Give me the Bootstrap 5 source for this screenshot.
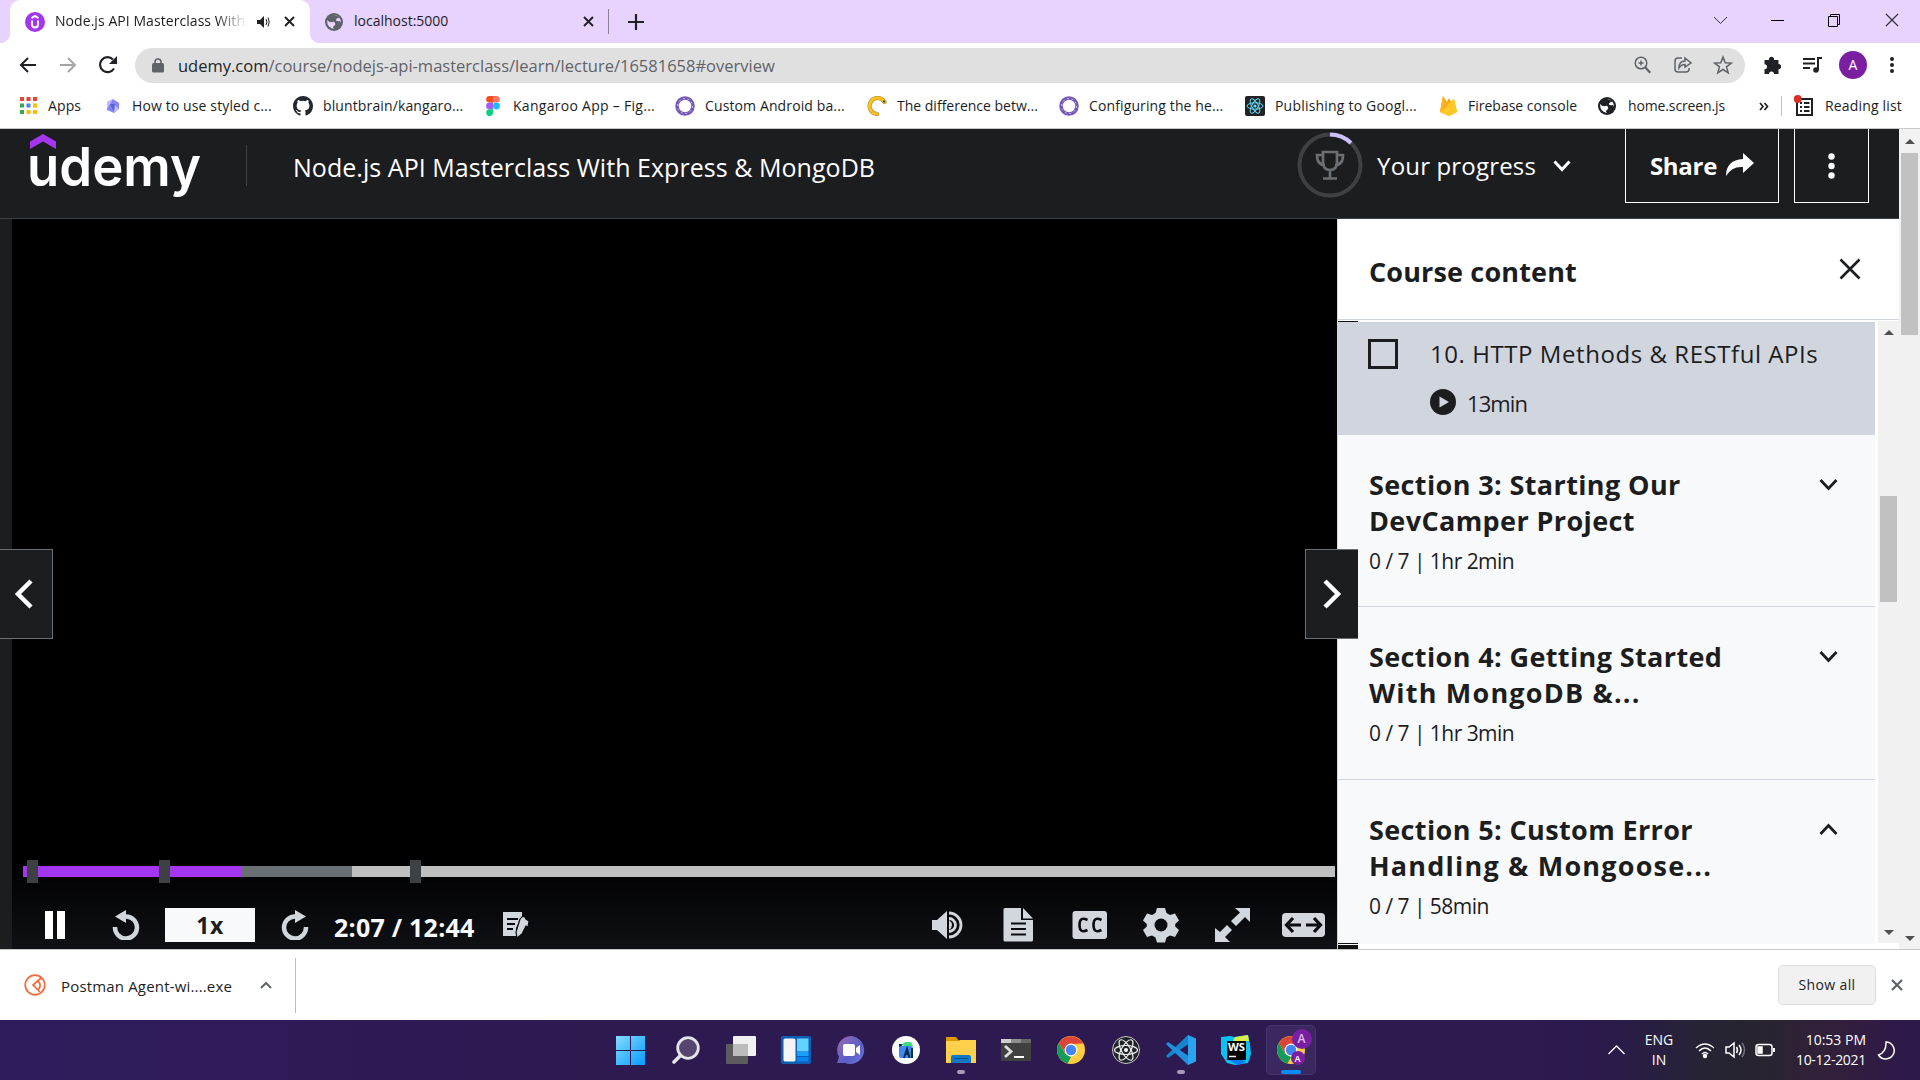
<!DOCTYPE html>
<html lang="en">
<head>
<meta charset="utf-8">
<title>Node.js API Masterclass With Express &amp; MongoDB</title>
<link rel="stylesheet" href="https://cdn.jsdelivr.net/npm/bootstrap@5.3.0/dist/css/bootstrap.min.css">
<style>
body{width:1920px;height:1080px;overflow:hidden;font-family:"Open Sans","Noto Sans",sans-serif;font-size:14px;line-height:1.2;color:#1c1d1f;background:#fff}
svg{display:block;flex:none}
span{white-space:nowrap}
.tabstrip{height:43px;background:#e8d3ff;padding-left:10px}
.tab-on{width:300px;height:43px;background:#fff;border-radius:10px 10px 0 0;padding-left:15px}
.tab-on:before,.tab-on:after{content:"";position:absolute;bottom:0;width:10px;height:10px}
.tab-on:before{left:-10px;background:radial-gradient(circle at 0 0,#e8d3ff 10px,#fff 10.5px)}
.tab-on:after{right:-10px;background:radial-gradient(circle at 100% 0,#e8d3ff 10px,#fff 10.5px)}
.tab-title{width:192px;letter-spacing:.06px;-webkit-mask-image:linear-gradient(90deg,#000 84%,transparent)}
.tab-off{width:298px;padding-left:15px}
.toolbar{height:44px}
.omnibox{width:1610px;height:35px;border-radius:18px;background:#e0e0e0;padding-left:17px;font-size:16.5px;color:#5f6368}
.url{padding-top:1px}
.me{width:28px;height:28px;border-radius:50%;background:#7b1fa2;color:#fff;font-size:14px}
.bookmarks{height:42px;border-bottom:1px solid #c8c8c8;padding-left:18px;display:grid;grid-template-columns:84px 191px 190px 192px 192px 192px 186px 193px 160px 162px 30px 13px 31px auto;align-items:center;padding-bottom:3px}
.bookmarks span{letter-spacing:.12px;padding-top:1px}
.bm-ico{width:30px;flex:none}
.page{height:820px}
.top-bar{height:90px;background:#1c1d1f;color:#fff;border-bottom:1px solid #3e4143;font-size:24px}
.course-name{font-size:25px;letter-spacing:.04px}
.brand-sep{width:1px;height:41px;background:#3e4143}
.outlined{border:1px solid #fff;border-top:0;height:74px;align-self:flex-start}
.scroller{width:21px;background:#f1f1f1}
.gutter{width:12px;background:#1c1d1f}
.player{width:1325px;background:#000}
.player-foot{height:121px;background:linear-gradient(#000 30%,#101116)}
.track{width:1312px;height:11px;margin:38px 0 0 11px;background:#bfbfbf}
.cue{top:-6px;width:11px;height:23px;background:#3e4143}
.ctl{height:46px;margin-top:25px;padding-left:33px;color:#f7f9fa}
.speed{width:90px;height:34px;background:#f7f9fa;color:#1c1d1f;font-weight:700;font-size:23px;letter-spacing:.6px;padding-top:2px}
.clock-time{width:142px;font-size:25px;letter-spacing:.25px;padding-top:3px}
.side{width:562px;background:#fff;border-left:1px solid #d1d7dc}
.side-head{height:101px;border-bottom:1px solid #d1d5de;padding:0 38px 0 31px;font-size:27px;font-weight:700}
.side-head span{letter-spacing:.15px;padding-top:6px}
.side-list{height:622px;width:537px;margin-top:2px;overflow:hidden;background:#f8f9fb}
.lec{height:113px;background:#d1d5de;padding:17px 0 0 30px}
.lec-name{font-size:24px;letter-spacing:.56px}
.lec-len{font-size:22px;letter-spacing:-.9px;padding-top:3px}
.tick{width:30px;height:30px;border:3px solid #1c1d1f;flex:none}
.sec{height:173px;padding:32px 37px 0 31px;border-bottom:1px solid #d1d5de}
.sec-first{height:172px}
.sec svg{margin-top:11px}
.sec-t{font-size:27px;font-weight:700;line-height:36px;letter-spacing:.38px}
.wide-t{letter-spacing:1.2px}
.sec-s{font-size:21px;line-height:36px;margin-top:4px;letter-spacing:-.53px}
.side-scroll{height:622px;margin-top:1px}
.jump{top:330px;width:53px;height:90px;background:#1c1d1f;border:1px solid #6a6f73;z-index:2}
.sliver{left:1338px;width:20px;height:1px;background:#111}
.shelf{height:71px;border-top:1px solid #c6c6c6;background:#fff;padding-left:24px}
.dl-name{width:171px;font-size:15px;letter-spacing:.17px;padding-top:1px}
.showall{width:98px;height:40px;border:1px solid #dadce0;border-radius:5px;background:#f1f1f1;letter-spacing:.37px}
.tbar{height:60px;color:#fff;background:linear-gradient(90deg,#2e1b5b 0,#2d1a51 600px,#2d1a51 1520px,#2b1b4b 1610px,#262335 1700px,#27242f 1760px,#32203a 1830px,#2f1a47 1890px,#2d1a4a)}
.slot{width:55px;height:60px}
.dotrun{bottom:6px;width:8px;height:4px;border-radius:2px;background:#a69bb8}
.active-app{width:50px;height:50px;border-radius:5px;background:#3a2860;border:1px solid #46356a}
.badge-a{border-radius:50%;background:#7b1fa2;color:#fff;font-weight:600;line-height:1}
.stack{line-height:20px}
</style>
</head>
<body class="d-flex flex-column">

<div class="tabstrip d-flex align-items-start">
  <div class="tab-on d-flex align-items-center position-relative">
    <svg width="20" height="20" viewBox="0 0 20 20"><circle cx="10" cy="10" r="10" fill="#a435f0"/><path d="M6.500 6.200 10 4l3.500 2.200M7 8.500v4a3 3 0 0 0 6 0v-4" fill="none" stroke="#fff" stroke-width="2"/></svg>
    <span class="tab-title" style="margin-left:10px">Node.js API Masterclass With</span>
    <svg style="margin-left:10px" width="13" height="12" viewBox="0 0 13 12"><path d="M0 4h3l4-4v12L3 8H0z" fill="#202124"/><path d="M9 3q2 3 0 6M11 1.500q2.500 4.500 0 9" fill="none" stroke="#202124"/></svg>
    <svg style="margin-left:14px" width="11" height="11" viewBox="0 0 11 11"><path d="M1 1l9 9M10 1l-9 9" stroke="#202124" stroke-width="1.900"/></svg>
  </div>
  <div class="tab-off d-flex align-items-center h-100">
    <svg width="18" height="18" viewBox="0 0 18 18"><circle cx="9" cy="9" r="9" fill="#5f6368"/><path d="M2 7q3 3 5 2t3 1-1 3 0 3Q2 15 2 7zM9 2q4 0 5 3-3 0-3 2t4 1l1 2q0-7-7-8z" fill="#e8d3ff"/></svg>
    <span style="margin-left:11px">localhost:5000</span>
    <svg class="ms-auto" style="margin-right:14px" width="11" height="11" viewBox="0 0 11 11"><path d="M1 1l9 9M10 1l-9 9" stroke="#202124" stroke-width="1.900"/></svg>
  </div>
  <div class="d-flex align-items-center h-100 flex-grow-1">
    <div style="width:1px;height:25px;background:#8b8494"></div>
    <svg style="margin-left:19px" width="16" height="16" viewBox="0 0 16 16"><path d="M8 0v16M0 8h16" stroke="#202124" stroke-width="2.200"/></svg>
    <svg class="ms-auto mb-1" style="margin-right:18px" width="206" height="14" viewBox="0 0 206 14"><path d="M18 4l6.500 6.500L31 4" fill="none" stroke="#333"/><path d="M75 7.500h13" stroke="#000"/><path d="M132.500 3.500h9v10h-9zM134.500 3.500v-2h9v10h-2" fill="none" stroke="#000"/><path d="M190 1l12 12M202 1l-12 12" stroke="#333" stroke-width="1.200"/></svg>
  </div>
</div>

<div class="toolbar d-flex align-items-center">
  <svg width="135" height="20" viewBox="0 0 135 20"><path d="M36 10H21M28 3l-7 7 7 7" fill="none" stroke="#202124" stroke-width="2"/><path d="M60 10h15M68 3l7 7-7 7" fill="none" stroke="#a5a5a5" stroke-width="2"/><path d="M114 13.500A7.500 7.500 0 1 1 113 4.500" fill="none" stroke="#202124" stroke-width="2.200"/><path d="M117 1v8h-8z" fill="#202124"/></svg>
  <div class="omnibox d-flex align-items-center">
    <svg width="12" height="15" viewBox="0 0 12 15"><rect y="5" width="12" height="9.500" rx="1.500" fill="#5f6368"/><path d="M3 6V4a3 3 0 0 1 6 0v2" fill="none" stroke="#5f6368" stroke-width="1.600"/></svg>
    <span style="margin-left:14px" class="url"><i class="fst-normal text-dark">udemy.com</i>/course/nodejs-api-masterclass/learn/lecture/16581658#overview</span>
    <svg class="ms-auto" style="margin-right:12px" width="100" height="20" viewBox="0 0 100 20" fill="none" stroke="#5f6368" stroke-width="1.500"><circle cx="8" cy="8" r="5.800"/><path d="M12.200 12.200l5 5.500" stroke-width="2.200"/><path d="M5.500 8h5M8 5.500v5"/><path d="M49 3h-4q-3 0-3 3v8q0 3 3 3h8q3 0 3-3v-1"/><path d="M46 13q0-7 6-7V3l6 5-6 4V9.500q-4 0-6 3.500z"/><path d="M90 2l2.200 5.800 6.100.3-4.800 3.800 1.700 5.900L90 14.500l-5.200 3.300 1.700-5.900-4.800-3.800 6.100-.3z"/></svg>
  </div>
  <svg style="margin-left:18px" width="80" height="20" viewBox="0 0 80 20"><path d="M1.500 5H6a2.600 2.600 0 1 1 5 0h4.500v4a2.600 2.600 0 1 1 0 5.200V19H11a2.500 2.500 0 1 0-5 0H1.500v-4.700a2.500 2.500 0 1 0 0-5z" fill="#202124"/><path d="M40 4h12M40 8.500h12M40 13h7M55 15V3h4" fill="none" stroke="#202124" stroke-width="2"/><circle cx="53" cy="15" r="2.800" fill="#202124"/></svg>
  <div class="me d-flex align-items-center justify-content-center" style="margin-left:-4px">A</div>
  <svg style="margin-left:23px" width="4" height="18" viewBox="0 0 4 18" fill="#202124"><circle cx="2" cy="3" r="2"/><circle cx="2" cy="9" r="2"/><circle cx="2" cy="15" r="2"/></svg>
</div>

<div class="bookmarks">
  <div class="d-flex align-items-center"><div class="bm-ico"><svg style="margin-left:2px" width="17" height="17" viewBox="0 0 17 17"><path d="M0 0h4v4H0zM6.500 0h4v4h-4zM13 0h4v4h-4z" fill="#ea4335"/><path d="M0 6.500h4v4H0zM0 13h4v4H0z" fill="#34a853"/><path d="M6.500 6.500h4v4h-4z" fill="#4285f4"/><path d="M13 6.500h4v4h-4zM6.500 13h4v4h-4zM13 13h4v4h-4z" fill="#fbbc05"/></svg></div><span>Apps</span></div>
  <div class="d-flex align-items-center"><div class="bm-ico"><svg style="margin-left:4px" width="14" height="14" viewBox="0 0 14 14"><path d="M7 0l6 4v6l-5 4-7-3V3z" fill="#8586f5"/><path d="M7 0L4 5l-3 5V3zM8 5l5 5-5 4z" fill="#c3bcfa"/><path d="M4 5h5l-1 8z" fill="#5b5fd8"/></svg></div><span>How to use styled c...</span></div>
  <div class="d-flex align-items-center"><div class="bm-ico"><svg width="20" height="20" viewBox="0 0 16 16"><path fill="#24292f" d="M8 0C3.580 0 0 3.580 0 8c0 3.540 2.290 6.530 5.470 7.590.4.070.55-.17.55-.38 0-.19-.010-.82-.010-1.490-2.010.37-2.530-.49-2.690-.94-.09-.23-.48-.94-.82-1.130-.28-.15-.68-.52-.010-.53.63-.010 1.080.58 1.230.82.72 1.210 1.870.87 2.330.66.070-.52.28-.87.51-1.070-1.780-.2-3.640-.89-3.640-3.950 0-.87.31-1.590.82-2.150-.08-.2-.36-1.020.08-2.120 0 0 .67-.21 2.200.82a7.600 7.600 0 0 1 4 0c1.530-1.040 2.200-.82 2.200-.82.44 1.100.16 1.920.08 2.120.51.56.82 1.270.82 2.150 0 3.070-1.870 3.750-3.650 3.950.29.25.54.73.54 1.480 0 1.070-.010 1.930-.010 2.200 0 .21.15.46.55.38A8 8 0 0 0 16 8c0-4.420-3.580-8-8-8z"/></svg></div><span>bluntbrain/kangaro...</span></div>
  <div class="d-flex align-items-center"><div class="bm-ico"><svg style="margin-left:3px" width="14" height="20" viewBox="0 0 14 20"><path d="M3.500 0H7v6.600H3.500a3.300 3.300 0 0 1 0-6.600z" fill="#f24e1e"/><path d="M7 0h3.500a3.300 3.300 0 0 1 0 6.600H7z" fill="#ff7262"/><path d="M3.500 6.600H7v6.700H3.500a3.300 3.300 0 0 1 0-6.700z" fill="#a259ff"/><circle cx="10.500" cy="10" r="3.400" fill="#1abcfe"/><path d="M3.500 13.300H7v3.300a3.400 3.400 0 1 1-3.500-3.300z" fill="#0acf83"/></svg></div><span style="letter-spacing:.28px">Kangaroo App – Fig...</span></div>
  <div class="d-flex align-items-center"><div class="bm-ico"><svg width="20" height="20" viewBox="0 0 20 20" fill="none"><circle cx="10" cy="10" r="8" stroke="#7457b8" stroke-width="3.500"/><circle cx="10" cy="10" r="7.500" stroke="#cfc3ea" stroke-dasharray="2 2.700"/></svg></div><span>Custom Android ba...</span></div>
  <div class="d-flex align-items-center"><div class="bm-ico"><svg width="20" height="20" viewBox="0 0 20 20" fill="none"><path d="M17.500 6A8 8 0 1 0 10 18" stroke="#a98b3a" stroke-width="4.200" stroke-linecap="round"/><path d="M17.500 6A8 8 0 1 0 10 18" stroke="#fcc21b" stroke-width="3" stroke-linecap="round"/><circle cx="17" cy="5.500" r="1" fill="#222"/></svg></div><span style="letter-spacing:0">The difference betw...</span></div>
  <div class="d-flex align-items-center"><div class="bm-ico"><svg width="20" height="20" viewBox="0 0 20 20" fill="none"><circle cx="10" cy="10" r="8" stroke="#7457b8" stroke-width="3.500"/><circle cx="10" cy="10" r="7.500" stroke="#cfc3ea" stroke-dasharray="2 2.700"/></svg></div><span>Configuring the he...</span></div>
  <div class="d-flex align-items-center"><div class="bm-ico"><svg width="20" height="20" viewBox="0 0 20 20"><rect width="20" height="20" rx="2" fill="#222"/><g fill="none" stroke="#61dafb"><ellipse cx="10" cy="10" rx="8" ry="3.200"/><ellipse cx="10" cy="10" rx="8" ry="3.200" transform="rotate(60 10 10)"/><ellipse cx="10" cy="10" rx="8" ry="3.200" transform="rotate(120 10 10)"/></g><circle cx="10" cy="10" r="1.600" fill="#61dafb"/></svg></div><span style="letter-spacing:.2px">Publishing to Googl...</span></div>
  <div class="d-flex align-items-center"><div class="bm-ico"><svg style="margin-left:2px" width="17" height="20" viewBox="0 0 17 20"><path d="M0 16L3 0l4 6 2-4 2 4 3-3 3 13-8 4z" fill="#ffa000"/><path d="M0 16L11 5l3-2 3 13-8 4z" fill="#ffca28"/><path d="M0 16L3 0l6 10z" fill="#ffb020"/></svg></div><span style="letter-spacing:0">Firebase console</span></div>
  <div class="d-flex align-items-center"><div class="bm-ico"><svg width="18" height="18" viewBox="0 0 18 18"><circle cx="9" cy="9" r="9" fill="#202124"/><path d="M2 7q3 3 5 2t3 1-1 3 0 3Q2 15 2 7zM9 2q4 0 5 3-3 0-3 2t4 1l1 2q0-7-7-8z" fill="#fff"/></svg></div><span style="letter-spacing:-.13px">home.screen.js</span></div>
  <svg style="margin-left:-1px" width="10" height="9" viewBox="0 0 10 9"><path d="M1 1l3 3.500L1 8M5.500 1l3 3.500-3 3.500" fill="none" stroke="#202124" stroke-width="1.700"/></svg>
  <div style="margin-left:-9px;width:1px;height:20px;background:#c0c0c0"></div>
  <svg style="margin-left:-9px;margin-top:-1px" width="20" height="22" viewBox="0 0 20 22"><rect x="3" y="4" width="15" height="16" fill="none" stroke="#202124" stroke-width="2"/><path d="M6 8h2M6 12h2M6 16h2M10 8h5.500M10 12h5.500M10 16h5.500" stroke="#202124" stroke-width="1.800"/><circle cx="3.700" cy="4" r="4" fill="#d93025"/></svg>
  <span style="margin-left:-9px;letter-spacing:.17px">Reading list</span>
</div>

<div class="page d-flex">
  <div class="d-flex flex-column" style="width:1899px">
    <header class="top-bar d-flex align-items-center">
      <svg class="overflow-visible align-self-start" style="margin-left:30px" width="171" height="80" viewBox="0 0 171 80"><path d="M0 12.500L13 5l13 7.500V20L13 12.500 0 20z" fill="#a435f0"/><text x="-3" y="57" textLength="174" lengthAdjust="spacingAndGlyphs" font-family="Inter, sans-serif" font-weight="600" font-size="54" fill="#fff">udemy</text></svg>
      <div class="brand-sep" style="margin:-16px 0 0 45px"></div>
      <span class="course-name" style="margin:-14px 0 0 46px">Node.js API Masterclass With Express &amp; MongoDB</span>
      <svg class="ms-auto" style="margin-top:-17px" width="66" height="66" viewBox="0 0 66 66" fill="none"><circle cx="33" cy="33" r="30.500" stroke="#3e4143" stroke-width="4"/><path d="M33 2.500A30.500 30.500 0 0 1 54 11" stroke="#cec0fc" stroke-width="4"/><path d="M26 20h14v10q0 8-7 8t-7-8zM26 23h-6q0 10 8 10M40 23h6q0 10-8 10M33 38v8M26 46.500h14" stroke="#6a6f73" stroke-width="2.700"/></svg>
      <span style="margin:-14px 0 0 14px;letter-spacing:.17px">Your progress</span>
      <svg style="margin:-16px 0 0 17px" width="18" height="12" viewBox="0 0 18 12"><path d="M1.500 1.500L9 9.500l7.500-8" fill="none" stroke="#fff" stroke-width="3"/></svg>
      <div class="outlined d-flex align-items-center justify-content-center" style="width:154px;margin-left:54px">
        <span class="fw-bold" style="letter-spacing:-.3px;padding-top:2px">Share</span>
        <svg style="margin-left:9px;margin-top:-3px" width="28" height="23" viewBox="0 0 28 23"><path d="M17 0l11 10-11 10v-6Q6 13 0 23 0 7 17 6z" fill="#fff"/></svg>
      </div>
      <div class="outlined d-flex align-items-center justify-content-center" style="width:75px;margin:0 30px 0 15px"><svg width="7" height="26" viewBox="0 0 7 26" fill="#fff"><circle cx="3.500" cy="3.500" r="3.200"/><circle cx="3.500" cy="13" r="3.200"/><circle cx="3.500" cy="22.500" r="3.200"/></svg></div>
    </header>

    <div class="d-flex flex-grow-1 position-relative">
      <div class="gutter"></div>
      <main class="player d-flex flex-column justify-content-end">
        <div class="player-foot">
          <div class="track position-relative d-flex">
            <div style="width:219px;background:#a435f0"></div><div style="width:110px;background:#6a6f73"></div>
            <div class="cue position-absolute" style="left:4px"></div><div class="cue position-absolute" style="left:136px"></div><div class="cue position-absolute" style="left:387px"></div>
          </div>
          <div class="ctl d-flex align-items-center">
            <svg width="20" height="28"><path d="M0 0h8v28H0zM12 0h8v28h-8z" fill="#fff"/></svg>
            <svg style="margin-left:47px" width="28" height="30" viewBox="0 0 28 30"><path d="M3 17A11 11 0 1 0 14 6.500" fill="none" stroke="#d1d7dc" stroke-width="4.500"/><path d="M14 0v13L3 6.500z" fill="#d1d7dc"/></svg>
            <div class="speed d-flex align-items-center justify-content-center" style="margin-left:25px"><span>1x</span></div>
            <svg style="margin-left:26px" width="28" height="30" viewBox="0 0 28 30"><path d="M25 17A11 11 0 1 1 14 6.500" fill="none" stroke="#d1d7dc" stroke-width="4.500"/><path d="M14 0v13l11-6.500z" fill="#d1d7dc"/></svg>
            <span class="clock-time fw-bold" style="margin-left:25px">2:07 / 12:44</span>
            <svg style="margin-left:26px" width="28" height="28" viewBox="0 0 28 28"><path d="M1 1h19v4l-6 12v8H1z" fill="#d1d7dc"/><path d="M5 8h11M5 13h8M5 18h6" stroke="#0b0c0f" stroke-width="2"/><path d="M18 8q4-5 6 0l3 2-1 6-2-1-4 8-5 4-1-6z" fill="#d1d7dc" stroke="#0b0c0f" stroke-width="1.200"/></svg>
            <svg class="ms-auto" style="margin-right:11px" width="394" height="36" viewBox="0 0 394 36"><g fill="#d1d7dc"><path d="M0 13h5l10-9v28L5 23H0zM17 13q6 5 0 10z"/><path d="M17 6a12 12 0 0 1 0 24M17 11.500a6.500 6.500 0 0 1 0 13" fill="none" stroke="#d1d7dc" stroke-width="2.800"/><path d="M73 1h16v12h12v20q0 1.500-1.500 1.500H73q-1.500 0-1.500-1.500V2.500Q71.500 1 73 1zM91 1l10 10.500H91z"/><rect x="140.500" y="4" width="34.500" height="28" rx="3"/><path transform="translate(2)" d="M223 1h8l1.500 5 3.500 2 5-1.500 4 7-3.800 3.500v2.500l3.800 3.500-4 7-5-1.500-3.500 2-1.500 5h-8l-1.500-5-3.500-2-5 1.500-4-7 3.800-3.500V17l-3.800-3.500 4-7 5 1.500 3.500-2z"/><path d="M303 1h15v14l-5-5-9 9-5-5 9-8.500zM283 35h15l-5-5 7-7-5-5-7 7-5-4z"/><rect x="350" y="6" width="43" height="24" rx="4"/></g><g fill="none" stroke="#0b0c0f"><circle cx="229" cy="18" r="6.500" fill="#0b0c0f" stroke="none"/><path d="M79 16.500h15M79 22h15M79 27.500h15" stroke-width="2.200"/><path d="M155.500 13q-8-4-8 5t8 5M169.500 13q-8-4-8 5t8 5" stroke-width="2.600"/><path d="M369 18h-12M361 11l-6.500 7 6.500 7M374 18h12M382 11l6.500 7-6.500 7" stroke-width="3.200"/></g></svg>
          </div>
        </div>
      </main>
      <aside class="side">
        <div class="side-head d-flex align-items-center justify-content-between"><span>Course content</span><svg width="22" height="22" viewBox="0 0 22 22"><path d="M1.500 1.500l19 19M20.500 1.500l-19 19" stroke="#1c1d1f" stroke-width="2.600"/></svg></div>
        <div class="d-flex justify-content-between">
          <div class="side-list">
            <div class="lec">
              <div class="d-flex align-items-center"><div class="tick"></div><span class="lec-name" style="margin-left:32px">10. HTTP Methods &amp; RESTful APIs</span></div>
              <div class="d-flex align-items-center" style="margin:18px 0 0 62px"><svg width="26" height="26" viewBox="0 0 26 26"><circle cx="13" cy="13" r="13" fill="#1c1d1f"/><path d="M9.500 7.500v11l9.500-5.500z" fill="#d1d5de"/></svg><span class="lec-len" style="margin-left:11px">13min</span></div>
            </div>
            <section class="sec sec-first d-flex justify-content-between"><div><div class="sec-t"><span>Section 3: Starting Our</span><br><span>DevCamper Project</span></div><div class="sec-s"><span>0 / 7 | 1hr 2min</span></div></div><svg width="19" height="13" viewBox="0 0 19 13"><path d="M1.500 2l8 8.500 8-8.500" fill="none" stroke="#1c1d1f" stroke-width="2.800"/></svg></section>
            <section class="sec d-flex justify-content-between"><div><div class="sec-t"><span>Section 4: Getting Started</span><br><span class="wide-t">With MongoDB &amp;...</span></div><div class="sec-s"><span>0 / 7 | 1hr 3min</span></div></div><svg width="19" height="13" viewBox="0 0 19 13"><path d="M1.500 2l8 8.500 8-8.500" fill="none" stroke="#1c1d1f" stroke-width="2.800"/></svg></section>
            <section class="sec d-flex justify-content-between"><div><div class="sec-t"><span>Section 5: Custom Error</span><br><span class="wide-t">Handling &amp; Mongoose...</span></div><div class="sec-s"><span>0 / 7 | 58min</span></div></div><svg width="19" height="13" viewBox="0 0 19 13"><path d="M1.500 11l8-8.500 8 8.500" fill="none" stroke="#1c1d1f" stroke-width="2.800"/></svg></section>
          </div>
          <div class="scroller side-scroll d-flex flex-column align-items-center">
            <svg style="margin-top:9px" width="10" height="5"><path d="M0 5l5-5 5 5z" fill="#505050"/></svg>
            <div style="margin-top:161px;width:17px;height:106px;background:#c1c1c1"></div>
            <svg class="mt-auto mb-2" width="10" height="5"><path d="M0 0l5 5 5-5z" fill="#505050"/></svg>
          </div>
        </div>
      </aside>
      <div class="sliver position-absolute" style="top:102px"></div>
      <div class="sliver position-absolute" style="top:724px"></div>
      <div class="sliver position-absolute" style="top:726px;height:4px"></div>
      <div class="jump position-absolute start-0 border-start-0 d-flex align-items-center"><svg style="margin-left:14px" width="20" height="30" viewBox="0 0 20 30"><path d="M17 2L4 15l13 13" fill="none" stroke="#fff" stroke-width="4.500"/></svg></div>
      <div class="jump position-absolute border-end-0 d-flex align-items-center" style="left:1305px"><svg style="margin-left:16px" width="20" height="30" viewBox="0 0 20 30"><path d="M3 2l13 13L3 28" fill="none" stroke="#fff" stroke-width="4.500"/></svg></div>
    </div>
  </div>
  <div class="scroller d-flex flex-column align-items-center">
    <svg style="margin-top:10px" width="10" height="5"><path d="M0 5l5-5 5 5z" fill="#505050"/></svg>
    <div style="margin-top:9px;width:17px;height:182px;background:#c1c1c1"></div>
    <svg class="mt-auto mb-2" width="10" height="5"><path d="M0 0l5 5 5-5z" fill="#505050"/></svg>
  </div>
</div>

<div class="shelf d-flex align-items-center">
  <svg width="22" height="22" viewBox="0 0 22 22" fill="none" stroke="#f26b3a"><circle cx="11" cy="11" r="9.800" stroke-width="1.700"/><path d="M17 4l-8 7 7 7M14 7l2 3v3l-2 3" stroke-width="1.700"/></svg>
  <span class="dl-name" style="margin-left:15px">Postman Agent-wi....exe</span>
  <svg style="margin-left:28px" width="12" height="8" viewBox="0 0 12 8"><path d="M1 7l5-5 5 5" fill="none" stroke="#5f6368" stroke-width="2"/></svg>
  <div style="margin-left:23px;width:1px;height:55px;background:#bcbcbc"></div>
  <div class="showall ms-auto d-flex align-items-center justify-content-center"><span>Show all</span></div>
  <svg style="margin:0 17px 0 15px" width="12" height="12" viewBox="0 0 12 12"><path d="M1 1l10 10M11 1L1 11" stroke="#5f6368" stroke-width="2.200"/></svg>
</div>

<div class="tbar d-flex align-items-center">
  <div class="d-flex" style="margin-left:603px">
    <div class="slot d-flex align-items-center justify-content-center"><svg width="29" height="29" viewBox="0 0 29 29"><defs><linearGradient id="wn" x2="1" y2="1"><stop stop-color="#80dcff"/><stop offset="1" stop-color="#0a9bff"/></linearGradient></defs><path d="M0 0h14v14H0zM15 0h14v14H15zM0 15h14v14H0zM15 15h14v14H15z" fill="url(#wn)"/></svg></div>
    <div class="slot d-flex align-items-center justify-content-center"><svg width="28" height="28" viewBox="0 0 28 28"><circle cx="16" cy="12" r="10.300" fill="#55456f" stroke="#e6e6ea" stroke-width="2.800"/><path d="M8.500 19.500L2 26" stroke="#e6e6ea" stroke-width="3.600" stroke-linecap="round"/></svg></div>
    <div class="slot d-flex align-items-center justify-content-center"><svg width="30" height="28" viewBox="0 0 30 28"><rect x="7" width="23" height="20" rx="1" fill="#f0f0f0"/><rect y="8" width="22" height="20" rx="1" fill="#5c5c5e"/><path d="M7 8h15v12H7z" fill="#bcbcbc"/></svg></div>
    <div class="slot d-flex align-items-center justify-content-center"><svg width="30" height="28" viewBox="0 0 30 28"><rect width="30" height="28" rx="2" fill="#0c5fb3"/><rect x="2.500" y="2.500" width="12" height="23" rx="1.500" fill="#f5f5f5"/><path d="M16 2.500h11.500v13H16z" fill="#60d3ff"/><path d="M16 16h11.500v4H16z" fill="#1a9fff"/><path d="M16 21h11.500v4.500H16z" fill="#0a84f0"/></svg></div>
    <div class="slot d-flex align-items-center justify-content-center"><svg width="30" height="30" viewBox="0 0 30 30"><defs><linearGradient id="ch" x2="1" y2="1"><stop stop-color="#9c6bb0"/><stop offset=".6" stop-color="#5b5fc7"/><stop offset="1" stop-color="#6f7be0"/></linearGradient></defs><path d="M15 1a14 14 0 1 1-6 27H1l2-6A14 14 0 0 1 15 1z" fill="url(#ch)"/><rect x="7" y="9" width="12" height="12" rx="2" fill="#fff"/><path d="M20 13l4-3v10l-4-3z" fill="#fff"/></svg></div>
    <div class="slot d-flex align-items-center justify-content-center"><svg width="28" height="28" viewBox="0 0 28 28"><circle cx="14" cy="14" r="14" fill="#fff"/><path d="M8 8h3q1-2 3-2h5l2 4h-9z" fill="#3ddc84"/><path d="M7 8h3v3H7z" fill="#073042"/><rect x="7" y="10" width="14" height="12" rx="2" fill="#4285f4"/><path d="M12 22l3-9 2.500 9M13 18h4M20 12v10" fill="none" stroke="#073042" stroke-width="2"/></svg></div>
    <div class="slot position-relative d-flex align-items-center justify-content-center"><svg width="30" height="28" viewBox="0 0 30 28"><path d="M0 1h10l3 4H0z" fill="#e09a00"/><path d="M0 5h12l2-1h16v23H0z" fill="#ffd04c"/><path d="M5 27v-6q0-2 2-2h16q2 0 2 2v6z" fill="#0f78c8"/><path d="M8 22.500h14" stroke="#064f8f"/></svg><i class="dotrun position-absolute"></i></div>
    <div class="slot d-flex align-items-center justify-content-center"><svg width="30" height="22" viewBox="0 0 30 22"><rect width="30" height="22" rx="1" fill="#404040"/><path d="M0 0h10v4H0z" fill="#cfcfcf"/><path d="M10 0h10v4H10z" fill="#8f8f8f"/><path d="M20 0h10v4H20z" fill="#686868"/><path d="M4 7l6 5.500L4 18" fill="none" stroke="#ddd" stroke-width="2.800"/><path d="M13 18h10" stroke="#fff" stroke-width="2"/></svg></div>
    <div class="slot d-flex align-items-center justify-content-center"><svg width="28" height="28" viewBox="0 0 28 28"><circle cx="14" cy="14" r="14" fill="#ffcd40"/><path d="M1.900 7A14 14 0 0 1 26.100 7.500L14 8l-6 9z" fill="#db4437"/><path d="M1.900 7L8 17.500l6 3.500-3.500 6.500A14 14 0 0 1 1.900 7z" fill="#0f9d58"/><circle cx="14" cy="14" r="6.400" fill="#fff"/><circle cx="14" cy="14" r="5.200" fill="#4285f4"/></svg></div>
    <div class="slot d-flex align-items-center justify-content-center"><svg width="28" height="28" viewBox="0 0 28 28" fill="none"><circle cx="14" cy="14" r="13.500" fill="#20232a" stroke="#c8c8c8"/><g stroke="#f0f0f0" stroke-width="1.200"><ellipse cx="14" cy="14" rx="11.500" ry="4.500"/><ellipse cx="14" cy="14" rx="11.500" ry="4.500" transform="rotate(60 14 14)"/><ellipse cx="14" cy="14" rx="11.500" ry="4.500" transform="rotate(120 14 14)"/></g><circle cx="14" cy="14" r="2" fill="#fff"/></svg></div>
    <div class="slot position-relative d-flex align-items-center justify-content-center"><svg width="30" height="30" viewBox="0 0 30 30"><path d="M22 0L3 18l-3 3 2 2L24 8z" fill="#1484cf"/><path d="M22 30L3 12 0 9l2-2 22 15z" fill="#2090dc"/><path d="M22 0l8 3.500v23L22 30z" fill="#2ba3f0"/></svg><i class="dotrun position-absolute"></i></div>
    <div class="slot d-flex align-items-center justify-content-center"><svg width="30" height="30" viewBox="0 0 30 30"><path d="M0 2l9-1 5 1 13-2 2 9 1 10-3 9-13 2-8-2-6-9z" fill="#07c3f2"/><path d="M14 2l13-2 1 6H12z" fill="#d9ee4a"/><path d="M5 24l12-2 8 5-8 3z" fill="#087cfa"/><rect x="6" y="6" width="19" height="19" fill="#000"/><text x="7" y="16" font-family="Open Sans, sans-serif" font-weight="700" font-size="11" fill="#fff" textLength="17" lengthAdjust="spacingAndGlyphs">WS</text><path d="M8 21.500h7" stroke="#fff" stroke-width="1.500"/></svg></div>
    <div class="slot position-relative d-flex align-items-center justify-content-center"><div class="active-app position-relative d-flex align-items-center justify-content-center"><svg width="28" height="28" viewBox="0 0 28 28"><circle cx="14" cy="14" r="14" fill="#ffcd40"/><path d="M1.900 7A14 14 0 0 1 26.100 7.500L14 8l-6 9z" fill="#db4437"/><path d="M1.900 7L8 17.500l6 3.500-3.500 6.500A14 14 0 0 1 1.900 7z" fill="#0f9d58"/><circle cx="14" cy="14" r="6.400" fill="#fff"/><circle cx="14" cy="14" r="5.200" fill="#4285f4"/></svg><div class="badge-a position-absolute d-flex align-items-center justify-content-center" style="left:25px;top:3px;width:20px;height:20px;font-size:12px;color:#d9bfe6">A</div><div class="badge-a position-absolute d-flex align-items-center justify-content-center" style="left:24px;top:25px;width:14px;height:14px;font-size:9px">A</div></div><i class="dotrun position-absolute" style="width:20px;background:#0a8cff"></i></div>
  </div>
  <svg style="margin-left:290px" width="17" height="10" viewBox="0 0 17 10"><path d="M.5 9l8-8 8 8" fill="none" stroke="#fff" stroke-width="1.300"/></svg>
  <div class="stack text-center" style="margin-left:18px;width:32px"><span>ENG</span><br><span>IN</span></div>
  <svg style="margin-left:20px" width="84" height="22" viewBox="0 0 84 22" fill="none" stroke="#fff" stroke-width="1.500"><path d="M1 9q9-8 18 0M4 12q6-6 12 0M7 15q3-3 6 0"/><circle cx="10" cy="17" r="1.500" fill="#fff"/><path d="M31 8h3l5-4v14l-5-4h-3zM41.500 8q2 3 0 6M44 6q4 5 0 10"/><path d="M47 4q5 7 0 14" stroke="#766f80"/><rect x="61" y="5.500" width="16" height="11" rx="2.500"/><path d="M79 9v4" stroke-width="2"/><path d="M63 8h4v6h-4z" fill="#fff"/></svg>
  <div class="stack text-end" style="margin-left:1px;width:86px"><span>10:53 PM</span><br><span style="letter-spacing:-.3px">10-12-2021</span></div>
  <svg style="margin-left:11px" width="19" height="19" viewBox="0 0 19 19"><path d="M9 1a8.500 8.500 0 1 1-7.500 13Q9.500 11 9 1z" fill="none" stroke="#fff" stroke-width="1.500"/></svg>
</div>
<script src="https://cdn.jsdelivr.net/npm/bootstrap@5.3.0/dist/js/bootstrap.bundle.min.js"></script>
</body>
</html>
